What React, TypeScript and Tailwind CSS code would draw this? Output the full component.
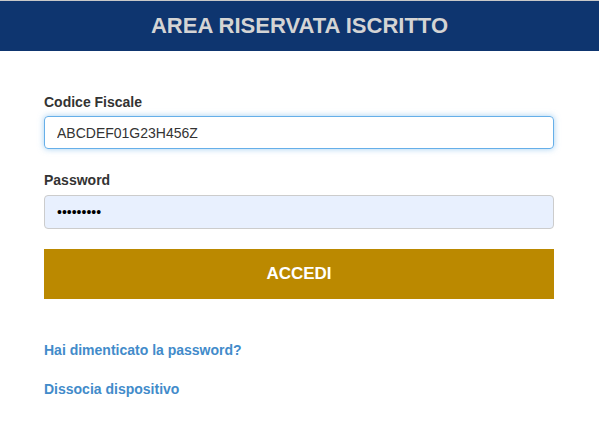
export default function App() {
  return (
    <div className="min-h-[429px] bg-white font-['Liberation_Sans',Arial,sans-serif] text-[14px] text-[#333]">
      <div className="border-t border-[#c8c8c8] bg-[#0e356f] h-[51px] flex items-center justify-center">
        <h1 className="text-[22px] font-bold text-[#d4d4d4] leading-none">AREA RISERVATA ISCRITTO</h1>
      </div>

      <form className="px-[44px] pt-[41px]" onSubmit={(e) => e.preventDefault()}>
        <label className="block font-bold mb-[4px] leading-[20px]">Codice Fiscale</label>
        <input
          type="text"
          defaultValue="ABCDEF01G23H456Z"
          className="block w-[510px] h-[33px] px-[12px] rounded-[4px] border border-[#66afe9] shadow-[0_0_6px_rgba(102,175,233,0.6)] outline-none text-[14px] text-[#333]"
        />

        <label className="block font-bold mt-[21px] mb-[5px] leading-[20px]">Password</label>
        <input
          type="password"
          defaultValue="ABCDEFGHI"
          className="block w-[510px] h-[34px] px-[12px] rounded-[4px] border border-[#cccccc] bg-[#e8f0fe] outline-none text-[14px] text-black"
        />

        <button
          type="submit"
          className="mt-[20px] w-[510px] h-[50px] bg-[#bb8900] text-white font-bold text-[17px]"
        >
          ACCEDI
        </button>

        <div className="mt-[41px] flex flex-col gap-[19px] font-bold text-[#428bca]">
          <a href="#" className="leading-[20px]">Hai dimenticato la password?</a>
          <a href="#" className="leading-[20px]">Dissocia dispositivo</a>
        </div>
      </form>
    </div>
  )
}
